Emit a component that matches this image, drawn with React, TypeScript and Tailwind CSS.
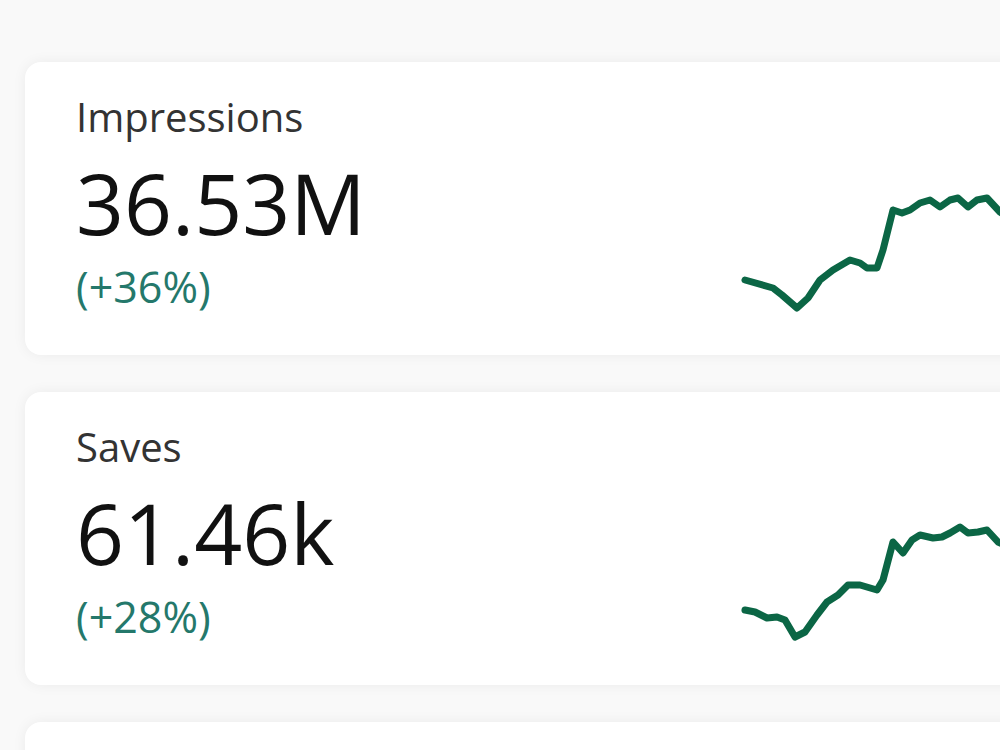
type Metric = {
  label: string
  value: string
  change: string
  points: [number, number][]
}

// sparkline points are in card-local coordinates (svg sits at the card's top)
const metrics: Metric[] = [
  {
    label: 'Impressions',
    value: '36.53M',
    change: '(+36%)',
    points: [
      [5, 218], [33, 226], [42, 233], [57, 246], [68, 236], [80, 218], [93, 208],
      [110, 198], [120, 201], [127, 206], [137, 206], [143, 188], [153, 148],
      [162, 151], [170, 148], [180, 141], [190, 138], [200, 145], [210, 138],
      [218, 136], [228, 145], [237, 138], [247, 136], [260, 150], [275, 160], [290, 155],
    ],
  },
  {
    label: 'Saves',
    value: '61.46k',
    change: '(+28%)',
    points: [
      [5, 218], [15, 220], [27, 226], [37, 225], [45, 228], [55, 245], [65, 240],
      [77, 223], [87, 210], [98, 203], [108, 193], [120, 193], [137, 198], [143, 188],
      [153, 150], [163, 161], [172, 148], [180, 143], [193, 146], [202, 145],
      [210, 141], [220, 135], [228, 141], [238, 140], [247, 138], [258, 150],
      [275, 158], [290, 152],
    ],
  },
]

function Sparkline({ points }: { points: [number, number][] }) {
  const d = points.map(([x, y], i) => `${i ? 'L' : 'M'}${x} ${y}`).join(' ')
  return (
    <svg width="300" height="293" viewBox="0 0 300 293" className="shrink-0">
      <path d={d} fill="none" stroke="#0b6645" strokeWidth="7" strokeLinejoin="round" strokeLinecap="round" />
    </svg>
  )
}

function MetricCard({ metric }: { metric: Metric }) {
  return (
    <div className="flex h-[293px] w-[1100px] shrink-0 rounded-2xl bg-white shadow-[0_0_14px_rgba(0,0,0,0.06)]">
      <div className="flex w-[715px] flex-col pl-[51px] pt-[35px]">
        <div className="text-[40px] leading-none text-[#333333]">{metric.label}</div>
        <div className="mt-[24px] text-[84px] leading-none text-[#111111]">{metric.value}</div>
        <div className="mt-[20px] text-[43px] leading-none text-[#24786b]">{metric.change}</div>
      </div>
      <Sparkline points={metric.points} />
    </div>
  )
}

export default function App() {
  return (
    <div
      className="flex h-[750px] w-[1000px] flex-col gap-[37px] overflow-hidden bg-[#f9f9f9] pl-[25px] pt-[62px]"
      style={{ fontFamily: '"Open Sans", "Noto Sans", sans-serif' }}
    >
      {metrics.map((m) => (
        <MetricCard key={m.label} metric={m} />
      ))}
      {/* next card in the list, only its top edge is on screen */}
      <div className="h-[293px] w-[1100px] shrink-0 rounded-2xl bg-white shadow-[0_0_14px_rgba(0,0,0,0.06)]" />
    </div>
  )
}
